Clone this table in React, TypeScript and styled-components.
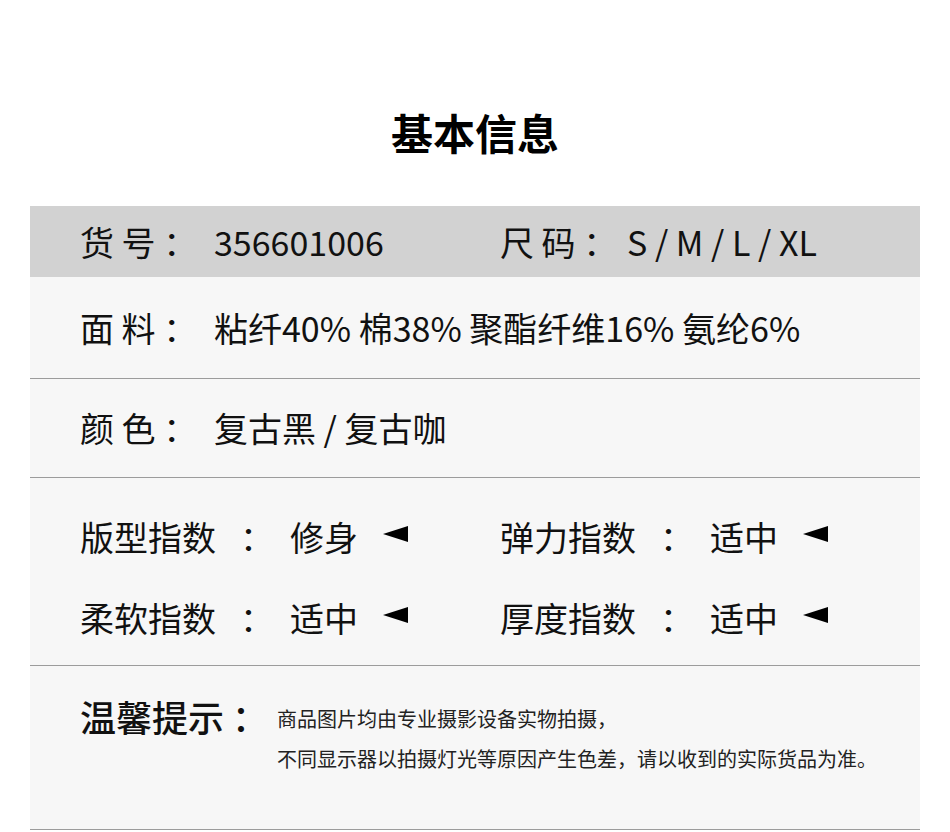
import { FC } from "react";
import styled, { createGlobalStyle } from "styled-components";

const GlobalStyle = createGlobalStyle`
  html, body {
    margin: 0;
    padding: 0;
    background: #ffffff;
  }
  body {
    font-family: "Noto Sans CJK SC", "Noto Sans", sans-serif;
    color: #111111;
  }
`;

const lineColor = "#9c9c9c";

const Page = styled.div`
  width: 950px;
  padding-top: 102px;
`;

const Title = styled.h1`
  margin: 0 0 45px;
  text-align: center;
  font-size: 42px;
  line-height: 59px;
  font-weight: 700;
  color: #000000;
`;

const Panel = styled.section`
  margin: 0 30px;
  background: #f7f7f7;
`;

const HeaderRow = styled.div`
  display: grid;
  grid-template-columns: 420px 420px;
  align-items: center;
  height: 71px;
  padding-left: 50px;
  background: #d2d2d2;
`;

const InfoRow = styled.div<{ $height: number }>`
  display: flex;
  align-items: center;
  height: ${(p) => p.$height}px;
  padding-left: 50px;
  border-bottom: 1px solid ${lineColor};
`;

const Field = styled.div`
  display: flex;
  align-items: center;
  font-size: 34px;
  line-height: 48px;
  white-space: pre;
`;

const Label = styled.span<{ $width: number }>`
  width: ${(p) => p.$width}px;
  flex-shrink: 0;
`;

const Value = styled.span``;

const IndexRow = styled.div`
  display: grid;
  grid-template-columns: 420px 420px;
  row-gap: 33px;
  height: 188px;
  box-sizing: border-box;
  padding: 35px 0 0 50px;
  border-bottom: 1px solid ${lineColor};
  align-content: start;
`;

const IndexItem = styled.div`
  display: grid;
  grid-template-columns: 160px 50px 93px 25px;
  align-items: center;
  font-size: 34px;
  line-height: 48px;
`;

const Pointer = styled.span`
  width: 0;
  height: 0;
  border-top: 8px solid transparent;
  border-bottom: 8px solid transparent;
  border-right: 25px solid #000000;
  margin-top: -6px;
`;

const NoteRow = styled.div`
  display: flex;
  align-items: flex-start;
  height: 164px;
  box-sizing: border-box;
  padding: 26px 0 0 50px;
  border-bottom: 1px solid ${lineColor};
`;

const NoteTitle = styled.div`
  width: 197px;
  flex-shrink: 0;
  font-size: 36px;
  line-height: 48px;
  font-weight: 500;
  white-space: pre;
`;

const NoteText = styled.div`
  padding-top: 7px;
  font-size: 20px;
  line-height: 40px;
  color: #222222;
`;

type IndexEntry = { label: string; value: string };

const indexes: IndexEntry[] = [
  { label: "版型指数", value: "修身" },
  { label: "弹力指数", value: "适中" },
  { label: "柔软指数", value: "适中" },
  { label: "厚度指数", value: "适中" },
];

const IndexCell: FC<IndexEntry> = ({ label, value }) => (
  <IndexItem>
    <span>{label}</span>
    <span>：</span>
    <span>{value}</span>
    <Pointer />
  </IndexItem>
);

export default function App() {
  return (
    <Page>
      <GlobalStyle />
      <Title>基本信息</Title>
      <Panel>
        <HeaderRow>
          <Field>
            <Label $width={134}>货 号 ：</Label>
            <Value>356601006</Value>
          </Field>
          <Field>
            <Label $width={127}>尺 码 ：</Label>
            <Value>S / M / L / XL</Value>
          </Field>
        </HeaderRow>
        <InfoRow $height={101}>
          <Field>
            <Label $width={134}>面 料 ：</Label>
            <Value>粘纤40% 棉38% 聚酯纤维16% 氨纶6%</Value>
          </Field>
        </InfoRow>
        <InfoRow $height={98}>
          <Field>
            <Label $width={134}>颜 色 ：</Label>
            <Value>复古黑 / 复古咖</Value>
          </Field>
        </InfoRow>
        <IndexRow>
          {indexes.map((item) => (
            <IndexCell key={item.label} {...item} />
          ))}
        </IndexRow>
        <NoteRow>
          <NoteTitle>温馨提示 ：</NoteTitle>
          <NoteText>
            商品图片均由专业摄影设备实物拍摄，
            <br />
            不同显示器以拍摄灯光等原因产生色差，请以收到的实际货品为准。
          </NoteText>
        </NoteRow>
      </Panel>
    </Page>
  );
}
